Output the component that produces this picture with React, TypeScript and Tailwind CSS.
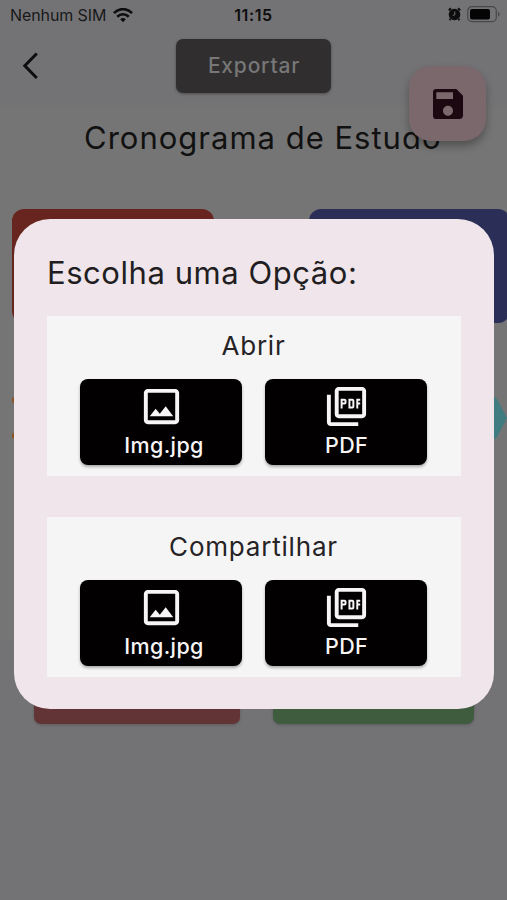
import { MdSave, MdOutlineImage, MdOutlinePictureAsPdf } from "react-icons/md";

function StatusBar() {
  return (
    <div className="grid h-[30px] grid-cols-3 items-center px-[10px] text-[#0d0d0e]">
      <div className="flex items-center gap-[7px] text-[16px] text-[#19191a]">
        <span className="whitespace-nowrap tracking-[-0.1px]">Nenhum SIM</span>
        <svg width="20" height="15" viewBox="0 0 20 15" fill="none" stroke="#0d0d0e" strokeWidth="2.7">
          <path d="M1 5.2C6-.2 14-.2 19 5.2" />
          <path d="M4.2 8.7c3.4-3.3 8.2-3.3 11.6 0" />
          <path d="M7.2 11.2c1.6-1.5 4-1.5 5.6 0L10 14.2z" fill="#0d0d0e" stroke="none" />
        </svg>
      </div>
      <span className="text-center text-[16px] font-semibold tracking-[0.6px]">11:15</span>
      <div className="-mr-[3px] flex items-center justify-end gap-[6px]">
        <svg width="13" height="14" viewBox="0 0 13 14" className="-mt-[2px]">
          <circle cx="6.5" cy="7.5" r="5.8" fill="#0d0d0e" />
          <path d="M.8 3.4 3 1.200M12.200 3.400 10 1.200M2.500 12l-1 1.200M10.500 12l1 1.200" stroke="#0d0d0e" strokeWidth="2" />
          <path d="M6.800 4.600v3.200L4.800 8.400" fill="none" stroke="#757577" strokeWidth="1" />
        </svg>
        <svg width="33" height="17" viewBox="0 0 33 17" className="-mt-[2px]">
          <rect x=".7" y=".7" width="28.6" height="15" rx="4.3" fill="none" stroke="#48484a" strokeWidth="1.2" />
          <rect x="3" y="3" width="20" height="10.4" rx="2" fill="#050505" />
          <path d="M31 5.8c2 .6 2 4.2 0 4.8z" fill="#48484a" />
        </svg>
      </div>
    </div>
  );
}

function FileButton({ kind }: { kind: "image" | "pdf" }) {
  const image = kind === "image";
  return (
    <button className="flex h-[86px] w-[162px] flex-col items-center rounded-[8px] bg-[#020001] pt-[4px] text-[#f7f5f6] shadow-[0_2px_3px_rgba(0,0,0,0.3)]">
      {image ? (
        <MdOutlineImage size={47} className="ml-px" />
      ) : (
        <MdOutlinePictureAsPdf size={47} className="ml-px" />
      )}
      <span
        className={
          image
            ? "pl-[6px] text-[21.5px] leading-[31px] font-[450] tracking-[0.4px]"
            : "pl-px text-[21.5px] leading-[31px] font-[450] tracking-[0.3px]"
        }
      >
        {image ? "Img.jpg" : "PDF"}
      </span>
    </button>
  );
}

function Section({ title }: { title: string }) {
  return (
    <section className="flex h-[160px] flex-col items-center bg-[#f5f5f5] pr-px">
      <h3 className="h-[63px] pt-[10px] text-[26px] leading-[39px] tracking-[0.8px] text-[#252326]">{title}</h3>
      <div className="flex gap-[23px]">
        <FileButton kind="image" />
        <FileButton kind="pdf" />
      </div>
    </section>
  );
}

function Schedule() {
  return (
    <div className="flex h-[900px] flex-col">
      <header className="h-[105px] bg-[#737376]">
        <StatusBar />
        <div className="grid grid-cols-[176px_155px_1fr] pt-[9px]">
          <svg className="mt-[12px] ml-[21px]" width="18" height="30" viewBox="0 0 18 30" fill="none" stroke="#0d0d0e" strokeWidth="3">
            <path d="M15.800 2.500 3.800 14.800l12 12.200" />
          </svg>
          <button className="h-[54px] rounded-[7px] bg-[#302e2f] pl-px text-[21px] font-[450] tracking-[0.8px] text-[#777778] shadow-[0_1px_3px_rgba(0,0,0,0.35)]">
            Exportar
          </button>
        </div>
      </header>
      <main className="h-[535px] bg-[#757575]">
        <h1 className="pt-[10px] pl-[84px] text-[31px] leading-[46px] tracking-[1px] whitespace-nowrap text-[#111]">
          Cronograma de Estudo
        </h1>
        <div className="mt-[48px] flex gap-[95px] overflow-hidden pl-[12px]">
          <div className="h-[114px] w-[202px] shrink-0 rounded-[12px] bg-[#68241f]" />
          <div className="h-[114px] w-[201px] shrink-0 rounded-[12px] bg-[#2b2f57]" />
        </div>
        <div className="mt-[74px] flex h-[42px] items-center justify-between">
          <svg className="ml-[12px]" width="30" height="42" viewBox="0 0 30 42">
            <path d="M0 0h30v42H0V39l8-18L0 3z" fill="#757575" />
            <path d="M0 1 12 21 0 41" fill="none" stroke="#8c5423" strokeWidth="3" />
          </svg>
          <svg width="30" height="42" viewBox="0 0 30 42">
            <path d="M0 0h17q2 0 3 2l10 19-10 19q-1 2-3 2H0z" fill="#417c80" />
          </svg>
        </div>
      </main>
      <footer className="flex-1 bg-[#737375]">
        <div className="flex gap-[33px] pl-[34px]">
          <div className="h-[84px] w-[206px] rounded-[7px] bg-[#633436] shadow-[0_1px_3px_rgba(0,0,0,0.2)]" />
          <div className="h-[84px] w-[201px] rounded-[7px] bg-[#3f5c3f] shadow-[0_1px_3px_rgba(0,0,0,0.2)]" />
        </div>
      </footer>
    </div>
  );
}

export default function App() {
  return (
    <div className="relative h-[900px] w-[507px] overflow-hidden font-['Inter','Liberation_Sans',sans-serif]">
      <Schedule />
      <button className="absolute top-[66px] left-[409px] flex h-[75px] w-[77px] items-center justify-center rounded-[22px] bg-[#7b686d] text-[#1c0811] shadow-[0_5px_9px_rgba(0,0,0,0.3)]">
        <MdSave size={40} />
      </button>
      <div className="absolute top-[219px] left-[14px] flex h-[490px] w-[480px] flex-col gap-[41px] rounded-[36px] bg-[#efe5ea] pr-[33px] pl-[33px]">
        <h2 className="-mb-[41px] h-[97px] pt-[31px] text-[31px] leading-[46px] tracking-[0.55px] whitespace-nowrap text-[#211d21]">
          Escolha uma Opção:
        </h2>
        <Section title="Abrir" />
        <Section title="Compartilhar" />
      </div>
    </div>
  );
}
